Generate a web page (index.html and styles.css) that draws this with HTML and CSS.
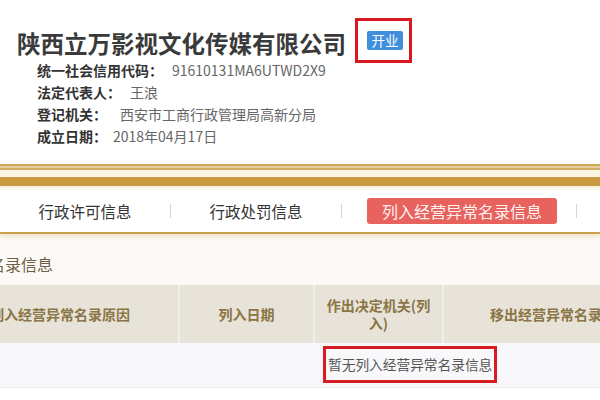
FILE: index.html
```html
<!DOCTYPE html>
<html lang="zh">
<head>
<meta charset="utf-8">
<link rel="stylesheet" href="styles.css">
</head>
<body>
<div class="page">
  <div class="head">
    <div class="title-row">
      <h1 class="title">陕西立万影视文化传媒有限公司</h1>
      <div class="mark"><span class="badge">开业</span></div>
    </div>
    <div class="info">
      <div class="row"><span class="lbl">统一社会信用代码：</span><span class="val">91610131MA6UTWD2X9</span></div>
      <div class="row"><span class="lbl">法定代表人：</span><span class="val">王浪</span></div>
      <div class="row"><span class="lbl">登记机关：</span><span class="val val-wide">西安市工商行政管理局高新分局</span></div>
      <div class="row"><span class="lbl">成立日期：</span><span class="val val-tight">2018年04月17日</span></div>
    </div>
  </div>
  <div class="stripes">
    <div class="stripe-a"></div>
    <div class="stripe-gap"></div>
    <div class="stripe-b"></div>
  </div>
  <div class="tabs">
    <div class="tab t1">行政许可信息</div>
    <span class="sep"></span>
    <div class="tab t2">行政处罚信息</div>
    <span class="sep"></span>
    <div class="tab t3"><span class="active">列入经营异常名录信息</span></div>
    <span class="sep"></span>
  </div>
  <div class="section">
    <div class="sec-title">经营异常名录信息</div>
  </div>
  <div class="table">
    <div class="thead">
      <div class="th c1">列入经营异常名录原因</div>
      <div class="th c2">列入日期</div>
      <div class="th c3">作出决定机关(列<br>入)</div>
      <div class="th c4">移出经营异常名录信息</div>
    </div>
    <div class="tbody">
      <span class="empty">暂无列入经营异常名录信息</span>
    </div>
  </div>
</div>
</body>
</html>
```
FILE: styles.css
```css
html, body {
  margin: 0;
  padding: 0;
  background: #ffffff;
}
.page {
  width: 600px;
  height: 400px;
  overflow: hidden;
  font-family: "Noto Sans CJK SC", "Noto Sans", sans-serif;
  color: #333;
}
.head {
  height: 164px;
  background: #fff;
}
.title-row {
  display: flex;
  align-items: center;
  padding: 18px 0 0 17px;
}
.title {
  margin: 4px 0 0 0;
  font-size: 23.5px;
  line-height: 30px;
  font-weight: 700;
  color: #3a3a3a;
  letter-spacing: 0;
}
.mark {
  margin-left: 9px;
  border: 3px solid #d8191f;
  width: 51px;
  height: 39px;
  box-sizing: content-box;
  display: flex;
  align-items: center;
}
.badge {
  margin-left: 9px;
  width: 36px;
  height: 19px;
  background: #3f8fdc;
  border-radius: 2px;
  color: #fff;
  font-size: 13.5px;
  line-height: 19px;
  text-align: center;
}
.info {
  margin-top: -4px;
  padding-left: 37px;
  font-size: 14px;
}
.row {
  display: flex;
  height: 22px;
  line-height: 22px;
}
.lbl {
  font-weight: 700;
  color: #333;
}
.val {
  margin-left: 9px;
  color: #666;
}
.val-wide { margin-left: 13px; }
.val-tight { margin-left: 6px; }

.stripes {
  display: flex;
  flex-direction: column;
}
.stripe-a {
  height: 6px;
  background: linear-gradient(#cfa95c 0, #cfa95c 2px, #e6cf9a 2px, #e6cf9a 4px, #d3b06a 4px, #d3b06a 6px);
}
.stripe-gap {
  height: 7px;
  background: #fcf4e4;
}
.stripe-b {
  height: 9px;
  background: #c99a3e;
}
.tabs {
  display: flex;
  align-items: center;
  height: 42px;
  padding-top: 4px;
  border-bottom: 2px solid #c9a04a;
  background: linear-gradient(#f8eedb 0, #ffffff 5px);
  box-shadow: 0 3px 4px rgba(220, 190, 130, 0.35);
  position: relative;
  font-size: 15.5px;
}
.tab {
  text-align: center;
  color: #333;
}
.t1 { width: 170px; }
.t2 { width: 170px; }
.t3 {
  width: 234px;
  display: flex;
}
.sep {
  width: 1px;
  height: 14px;
  background: #d6d6d6;
}
.active {
  display: block;
  margin-left: 25px;
  width: 190px;
  height: 26px;
  line-height: 26px;
  background: #e8625e;
  border-radius: 3px;
  color: #fff3f1;
  font-size: 16px;
  text-align: center;
}

.section {
  height: 51px;
  background: #fcfaf6;
  overflow: hidden;
}
.sec-title {
  margin-left: -75px;
  padding-top: 19px;
  font-size: 16px;
  line-height: 22px;
  color: #6e5f44;
}
.table {
  margin-left: -58px;
  width: 736px;
}
.thead {
  display: grid;
  grid-template-columns: 236px 135px 129px 236px;
  height: 58px;
  background: #e8e3d9;
}
.th {
  display: flex;
  align-items: center;
  justify-content: center;
  text-align: center;
  font-size: 14px;
  line-height: 18px;
  font-weight: 700;
  color: #8a7544;
}
.c2, .c3, .c4 {
  border-left: 2px solid #f2efe8;
}
.c4 { justify-content: flex-start; padding-left: 46px; }
.tbody {
  height: 45px;
  background: #f8f8fa;
  padding-left: 381px;
  padding-top: 3px;
  box-sizing: border-box;
  border-bottom: 1px solid #efefef;
}
.empty {
  display: inline-block;
  border: 3px solid #d81d22;
  padding: 0 2px;
  height: 31px;
  line-height: 31px;
  font-size: 13.7px;
  color: #555;
}
```
